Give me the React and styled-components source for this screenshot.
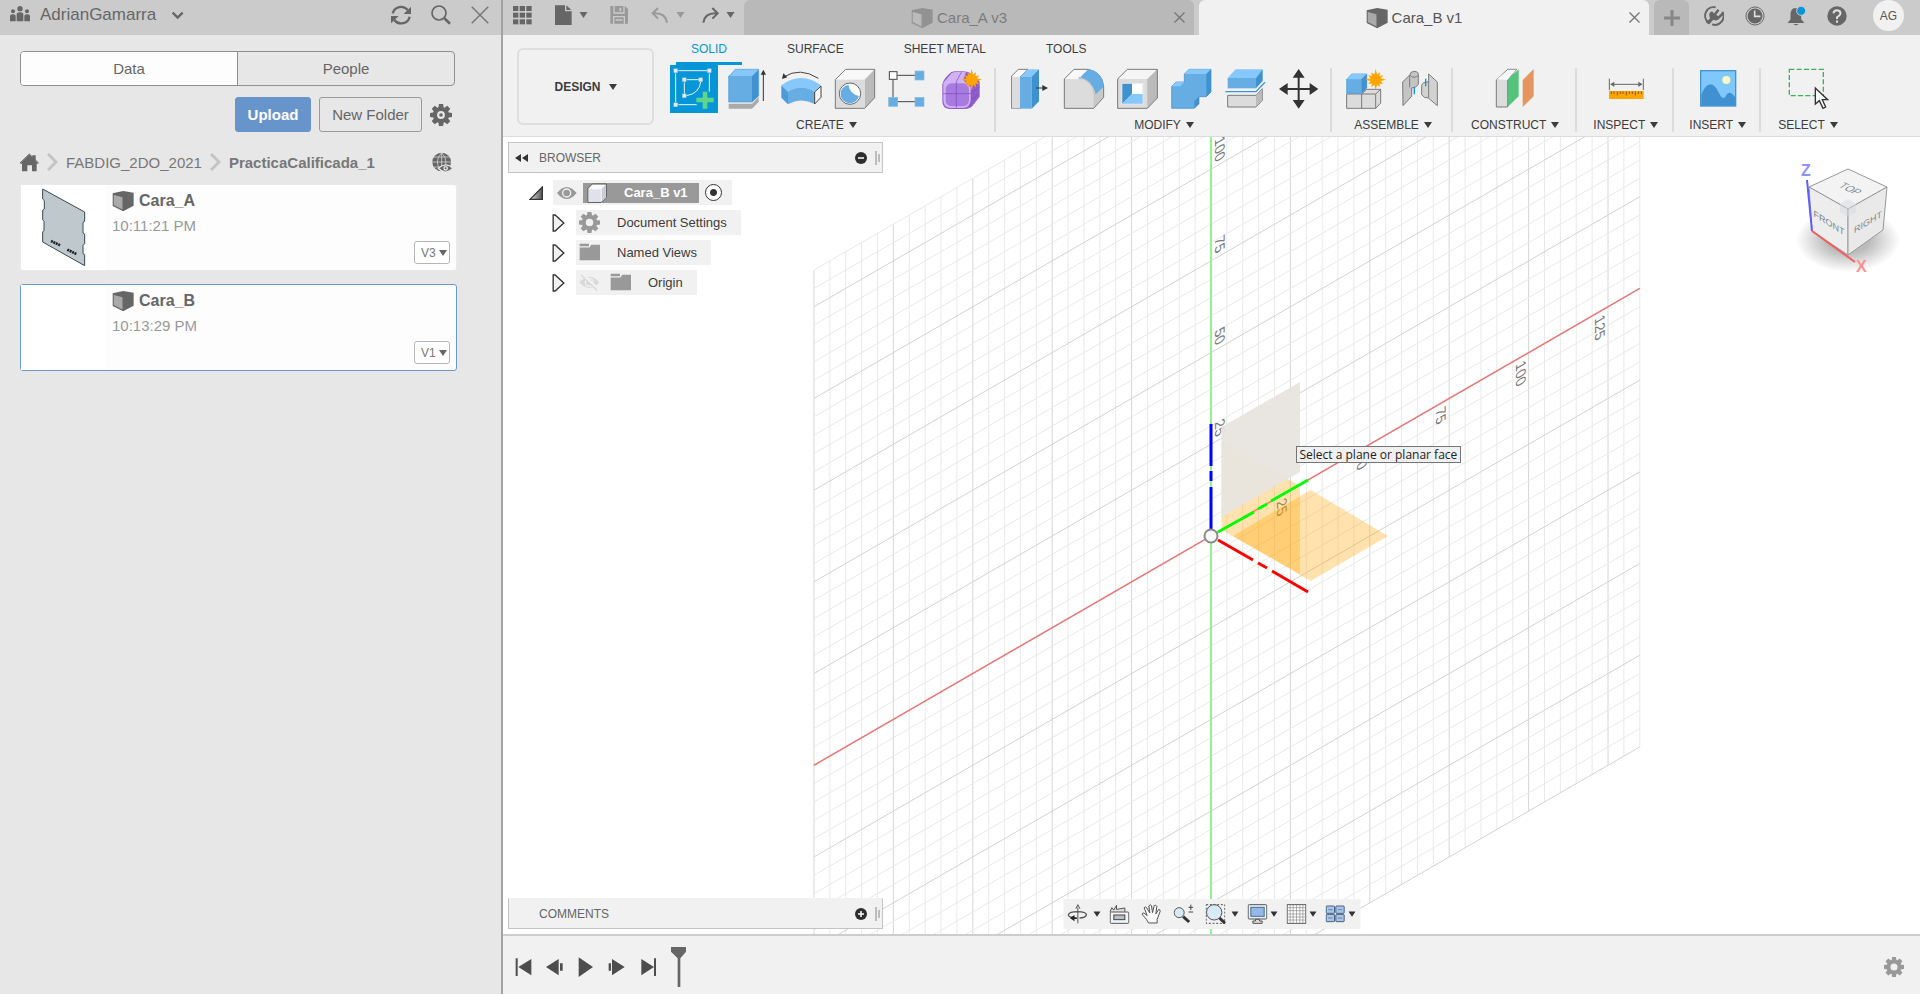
import React from 'react';
import styled, { createGlobalStyle, css } from 'styled-components';

const GlobalStyle = createGlobalStyle`
  *, *::before, *::after { box-sizing: border-box; }
  body { margin: 0; background: #fff; font-family: "Liberation Sans", Arial, sans-serif; }
  button, input, select { font: inherit; color: inherit; }
`;

/* ---------- shared parts ---------- */

const plainButton = css`
  display: flex;
  align-items: center;
  justify-content: center;
  padding: 0;
  border: 0;
  background: none;
  color: inherit;
  cursor: pointer;
`;

const IconButton = styled.button`
  ${plainButton}
  flex: none;
`;

const Glyph = styled.svg`
  display: block;
  flex: none;
`;

function Icon({ box, size = 20, height, children }) {
  return (
    <Glyph width={size} height={height || size} viewBox={box} aria-hidden="true">
      {children}
    </Glyph>
  );
}

function Caret({ size = 8, color = 'currentColor' }) {
  return (
    <Icon box="0 0 8 6" size={size} height={6}>
      <path d="M0 0H8L4 6Z" fill={color} />
    </Icon>
  );
}

function Star({ x, y }) {
  const points = [];
  for (let i = 0; i < 24; i += 1) {
    const r = i % 2 ? 16 : i % 6 === 0 ? 32 : 26;
    const a = (i * Math.PI) / 12;
    points.push(`${x + r * Math.sin(a)},${y - r * Math.cos(a)}`);
  }
  return <polygon points={points.join(' ')} fill="#ffa500" />;
}

function Gear({ size = 20, color = '#666', hub }) {
  return (
    <Icon box="-12 -12 24 24" size={size}>
      <circle r="6.5" fill="none" stroke={color} strokeWidth="4.5" />
      {[0, 45, 90, 135, 180, 225, 270, 315].map((a) => (
        <path key={a} d="M-3 -7H3L2.3 -12H-2.3Z" fill={color} transform={`rotate(${a})`} />
      ))}
      {hub && <circle r="2" fill={color} />}
    </Icon>
  );
}

function PartIcon({ size = 22, tone = '#666', face = '#aaa' }) {
  return (
    <Icon box="336 571 63 63" size={size}>
      <path d="M338 580L368 574L398 579V616L368 632L338 617Z" fill={tone} />
      <path d="M341 585L366 592V627L341 614Z" fill={face} />
    </Icon>
  );
}

/* ---------- page ---------- */

const Page = styled.div`
  display: flex;
  min-height: 100vh;
  overflow: hidden;
`;

const DataPanel = styled.aside`
  flex: none;
  width: 503px;
  background: #e7e7e7;
  border-right: 2px solid #a3a3a3;
  color: #666;
`;

const PanelHeader = styled.header`
  display: flex;
  align-items: center;
  gap: 20px;
  height: 35px;
  padding: 0 12px 5px 10px;
  background: #cbcbcb;
`;

const TeamButton = styled.button`
  ${plainButton}
  gap: 10px;
  margin-right: auto;
  font-size: 17px;
  line-height: 20px;
`;

const TeamName = styled.span`
  padding-right: 4px;
`;

const PanelBody = styled.div`
  padding: 16px 44px 0 20px;
  font-size: 15px;
`;

const Segments = styled.div`
  display: flex;
  height: 35px;
  margin-right: 2px;
  border: 1px solid #8f8f8f;
  border-radius: 4px;
  overflow: hidden;
`;

const Segment = styled.button`
  ${plainButton}
  flex: 1;
  background: ${(p) => (p.$active ? '#fdfdfd' : 'transparent')};
  & + & { border-left: 1px solid #8f8f8f; }
`;

const Actions = styled.div`
  display: flex;
  align-items: center;
  justify-content: flex-end;
  gap: 8px;
  margin: 11px 5px 0 0;
`;

const ActionButton = styled.button`
  ${plainButton}
  width: ${(p) => (p.$primary ? 76 : 103)}px;
  height: 35px;
  border: 1px solid ${(p) => (p.$primary ? '#6794cb' : '#999')};
  border-radius: 3px;
  background: ${(p) => (p.$primary ? '#6794cb' : 'transparent')};
  color: ${(p) => (p.$primary ? '#fff' : '#666')};
  font-weight: ${(p) => (p.$primary ? 700 : 400)};
`;

const Crumbs = styled.nav`
  display: flex;
  align-items: center;
  gap: 8px;
  height: 42px;
  margin: 10px 4px 0 0;
  padding-bottom: 2px;
`;

const Crumb = styled.a`
  color: #777;
  font-weight: ${(p) => (p.$current ? 700 : 400)};
  text-decoration: none;
`;

const PushRight = styled(IconButton)`
  margin-left: auto;
`;

const Files = styled.ul`
  display: flex;
  flex-direction: column;
  gap: 13px;
  margin: 0;
  padding: 0;
  list-style: none;
`;

const FileCard = styled.li`
  display: flex;
  height: 87px;
  border: 1px solid ${(p) => (p.$selected ? '#6a97cc' : '#e9e9e9')};
  border-radius: 3px;
  background: #fdfdfd;
`;

const Thumb = styled.div`
  width: 85px;
  background: #fff;
`;

const FileInfo = styled.div`
  flex: 1;
  padding: 5px 0 0 6px;
`;

const FileName = styled.div`
  display: flex;
  align-items: center;
  gap: 5px;
  height: 22px;
  font-size: 16px;
  font-weight: 700;
`;

const FileTime = styled.div`
  margin-top: 5px;
  color: #999;
  line-height: 18px;
`;

const Version = styled.label`
  position: relative;
  align-self: flex-end;
  width: 36px;
  height: 23px;
  margin: 0 6px 6px 0;
  & svg { position: absolute; right: 3px; top: 9px; pointer-events: none; }
`;

const VersionSelect = styled.select`
  appearance: none;
  width: 100%;
  height: 100%;
  padding: 0 0 0 6px;
  border: 1px solid #b5b5b5;
  border-radius: 3px;
  background: #fff;
  color: #777;
  font-size: 12px;
`;

/* ---------- workspace chrome ---------- */

const Workspace = styled.main`
  display: flex;
  flex: 1;
  flex-direction: column;
  min-width: 0;
  color: #3c3c3c;
`;

const TitleBar = styled.header`
  display: flex;
  gap: 5px;
  height: 35px;
  background: #cbcbcb;
`;

const QuickBar = styled.div`
  display: flex;
  align-items: center;
  width: 236px;
  padding: 0 0 5px 10px;
  color: #666;
`;

const QuickButton = styled.button`
  ${plainButton}
  gap: 6px;
  margin-right: ${(p) => p.$after}px;
  color: ${(p) => (p.$off ? '#999' : '#666')};
`;

const DocTab = styled.div`
  display: flex;
  flex: 1;
  align-items: center;
  padding: 0 9px 0 0;
  border-radius: 6px 6px 0 0;
  background: ${(p) => (p.$active ? '#f1f1f1' : '#b9b9b9')};
  color: ${(p) => (p.$active ? '#555' : '#7c7c7c')};
`;

const DocName = styled.button`
  ${plainButton}
  flex: 1;
  gap: 4px;
  font-size: 15px;
`;

const NewTab = styled.button`
  ${plainButton}
  width: 35px;
  border-radius: 6px 6px 0 0;
  background: #b9b9b9;
`;

const Account = styled.div`
  display: flex;
  align-items: center;
  gap: 21px;
  padding: 0 16px 4px 10px;
`;

const Avatar = styled.button`
  ${plainButton}
  width: 31px;
  height: 31px;
  margin-left: 5px;
  border-radius: 50%;
  background: #f1f1f1;
  color: #555;
  font-size: 12px;
`;

const Ribbon = styled.section`
  display: flex;
  gap: 13px;
  height: 102px;
  padding-left: 14px;
  border-bottom: 1px solid #dcdcdc;
  background: #f1f1f1;
  font-size: 12px;
`;

const DesignButton = styled.button`
  ${plainButton}
  flex: none;
  gap: 8px;
  width: 137px;
  height: 77px;
  margin-top: 13px;
  border: 2px solid #dedede;
  border-radius: 6px;
  font-weight: 700;
`;

const RibbonMain = styled.div`
  flex: 1;
  min-width: 0;
`;

const RibbonTabs = styled.nav`
  display: flex;
  gap: 30px;
  height: 30px;
  padding-left: 9px;
`;

const RibbonTab = styled.button`
  ${plainButton}
  padding: 0 15px;
  border-bottom: 3px solid ${(p) => (p.$active ? '#0696d7' : 'transparent')};
  color: ${(p) => (p.$active ? '#0696d7' : '#3c3c3c')};
`;

const Groups = styled.div`
  display: flex;
  padding-left: 3px;
`;

const Group = styled.div`
  position: relative;
  display: flex;
  flex: none;
  flex-direction: column;
  align-items: center;
  padding: ${(p) => p.$pad};
  &:not(:last-child)::after {
    content: '';
    position: absolute;
    top: 3px;
    right: 0;
    width: 2px;
    height: 64px;
    background: #dcdcdc;
  }
`;

const Tools = styled.div`
  display: flex;
  gap: ${(p) => p.$gap || 6}px;
`;

const Tool = styled.button`
  ${plainButton}
  width: 48px;
  height: 48px;
  background: ${(p) => (p.$active ? '#0696d7' : 'transparent')};
`;

const GroupLabel = styled.button`
  ${plainButton}
  gap: 5px;
  height: 24px;
`;

/* ---------- viewport ---------- */

const Viewport = styled.section`
  position: relative;
  display: flex;
  flex: 1;
  flex-direction: column;
  justify-content: space-between;
  padding: 5px;
  background: #fff;
  overflow: hidden;
`;

const Scene = styled.svg`
  position: absolute;
  inset: 0;
  width: 100%;
  height: 100%;
`;

const Dock = styled.div`
  position: relative;
  display: flex;
  align-items: center;
  width: 375px;
  height: 31px;
  padding: 0 1px 0 6px;
  border: 1px solid #c4c4c4;
  border-top-color: ${(p) => (p.$open ? '#c4c4c4' : '#f1f1f1')};
  background: #f1f1f1;
  color: #666;
  font-size: 12px;
`;

const DockTitle = styled.h2`
  flex: 1;
  margin: 0;
  padding-left: ${(p) => (p.$indent ? 24 : 11)}px;
  font-size: 12px;
  font-weight: 400;
`;

const Tree = styled.ul`
  display: flex;
  flex-direction: column;
  gap: 5px;
  margin: 7px 0 0;
  padding: 0;
  list-style: none;
  font-size: 13px;
`;

const TreeRow = styled.li`
  display: flex;
  align-items: center;
  gap: ${(p) => (p.$root ? 10 : 11)}px;
  height: 25px;
  padding-left: ${(p) => (p.$root ? 21 : 44)}px;
`;

const TreeItem = styled.div`
  display: flex;
  align-items: center;
  gap: 10px;
  height: 25px;
  padding: 0 14px 0 3px;
  background: #f1f1f1;
`;

const TreeText = styled.span`
  padding-left: 7px;
`;

const RootItem = styled(TreeItem)`
  gap: 6px;
  padding: 0 10px 0 4px;
`;

const RootName = styled.span`
  display: flex;
  align-items: center;
  gap: 17px;
  height: 20px;
  padding: 0 11px 0 4px;
  background: #999;
  color: #fff;
  font-weight: 700;
`;

const ActiveRadio = styled.input`
  appearance: none;
  width: 17px;
  height: 17px;
  margin: 0;
  border: 1px solid #333;
  border-radius: 50%;
  background: radial-gradient(circle, #333 3px, #fff 4px);
`;

const Hint = styled.div`
  position: absolute;
  left: calc(50% + 84px);
  top: calc(50% - 90px);
  height: 17px;
  padding: 0 3px;
  border: 1px solid #767676;
  background: #f0f0f0;
  color: #222;
  font-family: "Open Sans", "Noto Sans", sans-serif;
  font-size: 12px;
  line-height: 15px;
  white-space: nowrap;
`;

const CubeView = styled.svg`
  position: absolute;
  top: 23px;
  right: 10px;
`;

const NavBar = styled.div`
  position: absolute;
  bottom: 5px;
  left: 50%;
  display: flex;
  align-items: center;
  height: 30px;
  padding: 0 5px 0 4px;
  background: #f1f1f1;
  transform: translateX(-50%);
`;

const NavButton = styled.button`
  ${plainButton}
  gap: ${(p) => (p.$wide ? 6 : 3)}px;
  &:not(:last-child) { margin-right: ${(p) => (p.$menu ? 9 : 12)}px; }
`;

const Timeline = styled.footer`
  display: flex;
  align-items: center;
  height: 60px;
  padding: 4px 16px 0 12px;
  border-top: 2px solid #cdcdcd;
  background: #f1f1f1;
`;

const Playback = styled.div`
  display: flex;
  flex: 1;
  align-items: center;
  gap: 11px;
`;

/* ---------- ribbon icons ---------- */

const T = ({ x, children }) => <Icon box={`${x} 195 144 144`} size={48}>{children}</Icon>;
const edge = { stroke: '#7a7a7a', strokeWidth: 3, strokeLinejoin: 'round' };

const SketchIcon = () => (
  <T x={510}>
    <g fill="none" stroke="#e8f4fb" strokeWidth="3">
      <path d="M535 212H621M527 220V306M628 220V275M535 314H590M561 239H596M553 247V280M602 246Q598 280 560 287" />
    </g>
    {[[527, 212], [628, 212], [527, 314], [553, 239], [602, 239], [553, 287]].map(([x, y]) => (
      <rect key={`${x}-${y}`} x={x - 6} y={y - 6} width="12" height="12" fill="#e8e8e8" />
    ))}
    <path d="M608 275H622V293H641V307H622V326H608V307H589V293H608Z" fill="#5cd68a" />
  </T>
);

const createIcons = [
  ['Create Sketch', <SketchIcon />],
  ['Extrude', <T x={669}>
    <path d="M686 311H756L776 291V306L756 326H686Z" fill="#aaa" />
    <path d="M686 228L706 208H776L756 228Z" fill="#86c8fb" />
    <path d="M686 228H756V306H686Z" fill="#66ade4" />
    <path d="M756 228L776 208V288L756 306Z" fill="#3f92cf" />
    <path d="M690 227L706 208H776V288L756 306H686V228Z" fill="none" stroke="#4c9bd6" strokeWidth="2" />
    <path d="M790 303V218" stroke="#333" strokeWidth="3" />
    <path d="M782 224L790 209L798 224Z" fill="#333" />
  </T>],
  ['Revolve', <T x={828}>
    <path d="M851 231Q900 200 955 235" fill="none" stroke="#444" strokeWidth="3" />
    <path d="M846 237L850 220L862 232Z" fill="#333" />
    <path d="M844 256Q903 212 963 256L944 275Q903 250 864 275Z" fill="#86c8fb" />
    <path d="M864 275Q903 250 944 275V312Q903 290 864 313Z" fill="#66ade4" />
    <path d="M844 256L864 275V313L844 293Z" fill="#4c9bd6" />
    <path d="M944 276L963 258V292L944 312Z" fill="#f5f5f5" stroke="#444" strokeWidth="3" />
  </T>],
  ['Hole', <T x={987}>
    <path d="M1006 239L1037 208H1124L1094 239Z" fill="#f8f8f8" />
    <path d="M1094 239L1124 208V293L1094 325Z" fill="#bbb" />
    <path d="M1006 239H1094V325H1006Z" fill="#dcdcdc" />
    <path d="M1006 239L1037 208H1124V293L1094 325H1006Z" fill="none" {...edge} />
    <circle cx="1050" cy="281" r="32" fill="#fff" stroke="#666" strokeWidth="3" />
    <path d="M1045 254A28 28 0 1 0 1077 288Q1050 282 1045 254Z" fill="#66ade4" />
  </T>],
  ['Rectangular Pattern', <T x={1146}>
    <path d="M1192 226H1245M1179 239V293M1192 305H1245" stroke="#444" strokeWidth="3" />
    <rect x="1168" y="215" width="23" height="23" fill="#fff" stroke="#444" strokeWidth="3" />
    {[[1245, 213], [1166, 292], [1245, 292]].map(([x, y]) => (
      <rect key={x + y} x={x} y={y} width="27" height="27" fill="#66ade4" stroke="#8bb9d8" strokeWidth="2" />
    ))}
  </T>],
  ['Create Form', <T x={1305}>
    <path d="M1327 252Q1330 236 1354 216Q1372 210 1405 216L1439 245V290L1420 314Q1412 327 1392 327H1348Q1327 325 1327 303Z" fill="#8f5cc9" />
    <path d="M1330 248L1355 219Q1372 212 1398 216L1390 240L1412 262V300Q1410 323 1390 324H1350Q1330 322 1330 300Z" fill="#d0b2f5" />
    <rect x="1337" y="250" width="70" height="69" rx="18" fill="#a87be0" />
    <path d="M1369 245V325M1329 281H1411L1440 260M1369 245L1385 215M1414 257L1437 240M1414 300L1437 282" fill="none" stroke="#7b4ab8" strokeWidth="2" />
    <Star x={1415} y={239} />
  </T>],
];

const modifyIcons = [
  ['Press Pull', <T x={15}>
    <path d="M35 228L55 208H84L61 230V325H35Z" fill="#f8f8f8" {...edge} />
    <path d="M36 231H60V325H36Z" fill="#dcdcdc" />
    <path d="M60 230L84 208H117L95 230Z" fill="#86c8fb" />
    <path d="M60 230H95V326H60Z" fill="#66ade4" />
    <path d="M95 230L117 208V304L95 326Z" fill="#3f92cf" />
    <path d="M108 264H132" stroke="#333" strokeWidth="3" />
    <path d="M127 255L144 264L127 273Z" fill="#333" />
  </T>],
  ['Fillet', <T x={177}>
    <path d="M193 237L222 208H265Q308 218 311 260V292L281 325H193Z" fill="#c8c8c8" />
    <path d="M193 237L222 208H265L236 237Z" fill="#f8f8f8" />
    <path d="M193 237H236Q278 240 281 290V325H193Z" fill="#dcdcdc" />
    <path d="M193 237L222 208H265Q308 218 311 260V292L281 325H193Z" fill="none" {...edge} />
    <path d="M236 237L265 208Q308 216 311 260L287 283Q278 240 236 231Z" fill="#66ade4" />
  </T>],
  ['Shell', <T x={339}>
    <path d="M353 237L382 208H472V294L442 325H353Z" fill="#bbb" />
    <path d="M353 237L382 208H472L442 237Z" fill="#f5f5f5" />
    <path d="M353 237H442V325H353Z" fill="#dcdcdc" />
    <path d="M353 237L382 208H472V294L442 325H353Z" fill="none" {...edge} />
    <path d="M367 251H428V311H367Z" fill="#fff" stroke="#eee" strokeWidth="4" />
    <path d="M367 251H396V282L367 311Z" fill="#3f92cf" />
    <path d="M367 311L396 282H428V311Z" fill="#86c8fb" />
  </T>],
  ['Combine', <T x={501}>
    <path d="M515 259L528 246H553V222L567 208H633V276L619 290H597V311L583 325H515Z" fill="#66ade4" stroke="#3f86bf" strokeWidth="2" />
    <path d="M553 222L567 208H633L619 222ZM515 259L528 246H553L541 259Z" fill="#86c8fb" />
    <path d="M619 222L633 208V276L619 290ZM583 302L597 290V311L583 325Z" fill="#3f92cf" />
  </T>],
  ['Split Body', <T x={663}>
    <path d="M683 234L707 208H788L768 234Z" fill="#86c8fb" />
    <path d="M683 234H768V265H683Z" fill="#66ade4" />
    <path d="M768 234L788 208V243L768 265Z" fill="#3f92cf" />
    <path d="M676 275H768L795 247" fill="none" stroke="#3f92dd" strokeWidth="4" />
    <path d="M683 286H768L787 266V302L768 321H683Z" fill="#dcdcdc" {...edge} />
    <path d="M768 286L787 267V302L768 320Z" fill="#bbb" />
  </T>],
  ['Move', <T x={825}>
    <path d="M896 225V310M855 267H938" stroke="#333" strokeWidth="6" />
    <path d="M896 207L914 233H878ZM896 326L914 300H878ZM837 267L863 249V285ZM955 267L929 249V285Z" fill="#333" />
  </T>],
];

const assembleIcons = [
  ['New Component', <T x={1026}>
    <path d="M1040 282H1085L1100 268H1142V309L1127 325H1040Z" fill="#dcdcdc" {...edge} />
    <path d="M1085 282V325M1085 282H1127L1142 268M1127 282V325" fill="none" {...edge} />
    <path d="M1040 238L1055 222H1100V264L1085 280H1040Z" fill="#66ade4" stroke="#3f92cf" strokeWidth="2" />
    <path d="M1040 238L1055 222H1100L1085 238Z" fill="#86c8fb" />
    <path d="M1085 238L1100 222V264L1085 280Z" fill="#3f92cf" />
    <Star x={1127} y={239} />
  </T>],
  ['Joint', <T x={1188}>
    <path d="M1208 246L1229 225Q1231 214 1243 214Q1256 215 1255 224V253Q1250 263 1235 264V289L1209 317Z" fill="#c4c4c4" {...edge} />
    <path d="M1229 227V262M1231 226Q1242 238 1255 226" fill="none" {...edge} />
    <path d="M1312 317V246L1286 222V246Q1268 244 1265 257V284Q1272 295 1285 294Z" fill="#d2d2d2" {...edge} />
    <path d="M1286 245V293" {...edge} />
    <path d="M1243 262V283M1277 236V259" stroke="#1393e0" strokeWidth="4" />
  </T>],
];

const constructIcon = (
  <T x={153}>
    <path d="M169 240L203 208H230L203 240V321H169Z" fill="#dcdcdc" {...edge} />
    <path d="M171 238L204 209H228L202 240Z" fill="#f8f8f8" />
    <path d="M203 239L236 208V289L203 321Z" fill="#55c37b" />
    <path d="M248 240L281 207V289L248 321Z" fill="#e5965f" />
  </T>
);

const inspectIcon = (
  <T x={486}>
    <path d="M508 236V270M610 236V270M512 253H606" stroke="#666" strokeWidth="3" />
    <path d="M511 253L523 245V261ZM607 253L595 245V261Z" fill="#666" />
    <rect x="507" y="273" width="104" height="24" fill="#ffa500" />
    <path d="M514 274V282M522 274V282M532 274V286M541 274V282M549 274V282M559 274V286M568 274V282M577 274V282M586 274V286M595 274V282M604 274V282" stroke="#8a5a00" strokeWidth="3" />
  </T>
);

const insertIcon = (
  <T x={762}>
    <rect x="782" y="212" width="105" height="106" fill="#80c8fc" stroke="#4594cf" strokeWidth="4" />
    <path d="M784 284C800 244 820 244 835 275Q847 302 856 290Q868 266 885 292V317H784Z" fill="#3f92cf" />
    <circle cx="859" cy="240" r="12" fill="#fdf7c3" />
  </T>
);

const selectIcon = (
  <T x={1032}>
    <rect x="1048" y="208" width="102" height="79" fill="none" stroke="#3dae5d" strokeWidth="4" strokeDasharray="15 7" />
    <path d="M1126 264V312L1138 302L1149 325L1157 321L1147 299H1163Z" fill="#f8f8f8" stroke="#333" strokeWidth="4" />
  </T>
);

const groups = [
  { label: 'CREATE', pad: '0 13px 0 0', gap: 5, tools: createIcons },
  { label: 'MODIFY', pad: '0 9px', tools: modifyIcons },
  { label: 'ASSEMBLE', pad: '0 9px 0 10px', tools: assembleIcons },
  { label: 'CONSTRUCT', pad: '0 18px', tools: [['Offset Plane', constructIcon]] },
  { label: 'INSPECT', pad: '0 16px', tools: [['Measure', inspectIcon]] },
  { label: 'INSERT', pad: '0 15px', tools: [['Insert Image', insertIcon]] },
  { label: 'SELECT', pad: '0 17px', tools: [['Window Select', selectIcon]] },
];

/* ---------- 3D scene ---------- */

const STEP_X = 15.88;
const SLOPE = 0.5774;
const STEP_Y = 18.34;

function Grid() {
  const lines = [];
  const left = -25 * STEP_X;
  const right = 27 * STEP_X;
  for (let i = -25; i <= 27; i += 1) {
    const x = i * STEP_X;
    lines.push(
      <line key={`v${i}`} x1={x} x2={x} y1={-x * SLOPE - 27 * STEP_Y} y2={-x * SLOPE + 25 * STEP_Y}
        stroke={i % 5 ? '#e9e9e9' : '#d6d6d6'} />
    );
  }
  for (let j = -27; j <= 25; j += 1) {
    const y = j * STEP_Y;
    lines.push(
      <line key={`h${j}`} x1={left} x2={right} y1={y - left * SLOPE} y2={y - right * SLOPE}
        stroke={j % 5 ? '#e9e9e9' : '#d2d2d2'} />
    );
  }
  return <g>{lines}</g>;
}

function ScaleLabels() {
  const unit = STEP_X / 5;
  return (
    <g fontSize="14" fill="#777">
      {[25, 50, 75, 100].map((v) => (
        <text key={`z${v}`} textAnchor="end" transform={`translate(4 ${(-v * STEP_Y) / 5 - 6}) rotate(90) skewX(30)`}>{v}</text>
      ))}
      {[25, 50, 75, 100, 125].map((v) => (
        <text key={`x${v}`} transform={`translate(${v * unit - 13} ${-v * unit * SLOPE + 12}) rotate(90) skewX(30)`}>{v}</text>
      ))}
    </g>
  );
}

function ModelScene() {
  return (
    <Scene viewBox="-708 -399 1417 797" preserveAspectRatio="xMidYMid slice" role="img" aria-label="Origin planes and sketch grid">
      <Grid />
      <line x1={-25 * STEP_X} y1={25 * STEP_X * SLOPE} x2={27 * STEP_X} y2={-27 * STEP_X * SLOPE} stroke="#e67878" strokeWidth="1.5" />
      <line x1="0" x2="0" y1="-495" y2="458" stroke="#8ff58f" strokeWidth="2" />
      <ScaleLabels />
      <path d="M10.5 -95L89 -50V38L10.5 -6Z" fill="#ffa500" fillOpacity="0.32" />
      <path d="M22 0L99.5 -46L177 0L99.5 45Z" fill="#ffa500" fillOpacity="0.32" />
      <path d="M10.5 -109L89 -154V-64L10.5 -19Z" fill="#e8e4df" fillOpacity="0.94" />
      <path d="M0 -112V-70M0 -65V-55M0 -49V-7" stroke="#00f" strokeWidth="3" />
      <path d="M7 -4L43 -24M47 -27L56 -32M60 -35L97 -56" stroke="#0f0" strokeWidth="3" />
      <path d="M7 4L42 24M47 27L56 32M61 35L97 56" stroke="#f00" strokeWidth="3" />
      <circle r="6.5" fill="#f8f8f8" stroke="#8a8a8a" strokeWidth="2" />
    </Scene>
  );
}

function ViewCube() {
  return (
    <CubeView width="120" height="120" viewBox="0 0 120 120" role="img" aria-label="View cube">
      <defs>
        <radialGradient id="shade">
          <stop offset="0.4" stopColor="#777" stopOpacity="0.5" />
          <stop offset="0.75" stopColor="#777" stopOpacity="0.2" />
          <stop offset="1" stopColor="#777" stopOpacity="0" />
        </radialGradient>
      </defs>
      <ellipse cx="58" cy="80" rx="52" ry="32" fill="url(#shade)" />
      <g stroke="#999" strokeLinejoin="round">
        <path d="M58 9L97 27L58 49L19 27Z" fill="#f3f3f3" />
        <path d="M19 27L58 49V95L22 71Z" fill="#ededed" />
        <path d="M97 27L58 49V95L93 70Z" fill="#e9e9e9" />
      </g>
      <path d="M50 44L58 39L66 44V52L58 57L50 52Z" fill="#d5d9e0" fillOpacity="0.5" />
      <path d="M17 20L22 71" stroke="#5c5cff" strokeWidth="2" />
      <path d="M22 71L65 102" stroke="#f06060" strokeWidth="2" />
      <g fill="#80868c" textAnchor="middle">
        <text transform="translate(57 31) rotate(26) skewX(-30)" fontSize="10">TOP</text>
        <text transform="translate(39 66) skewY(32)" fontSize="9">FRONT</text>
        <text transform="translate(78 65) skewY(-31)" fontSize="9">RIGHT</text>
      </g>
      <g fontSize="16" fontWeight="700">
        <text x="11" y="16" fill="#9090ff">Z</text>
        <text x="66" y="112" fill="#ff9090">X</text>
      </g>
    </CubeView>
  );
}

/* ---------- small icons ---------- */

const CloseIcon = ({ size = 18, width = 4 }) => (
  <Icon box="0 0 48 48" size={size}>
    <path d="M2 2L46 46M46 2L2 46" stroke="#777" strokeWidth={width} />
  </Icon>
);

const Chevron = () => (
  <Icon box="0 0 11 18" size={11} height={18}>
    <path d="M1 1L9 9L1 17" fill="none" stroke="#c4c4c4" strokeWidth="3" />
  </Icon>
);

const FolderIcon = () => (
  <Icon box="235 322 63 60" size={21}>
    <path d="M237 326H265V333H237ZM237 337H266L272 329H298V375H237Z" fill="#999" />
  </Icon>
);

const Expander = () => (
  <Icon box="158 235 38 54" size={13} height={18}>
    <path d="M161 238L167 238L193 262L167 286H161Z" fill="#f1f1f1" stroke="#333" strokeWidth="4" />
  </Icon>
);

const Grip = () => (
  <Icon box="0 0 14 16" size={14} height={16}>
    <path d="M9 1V15M12 4V12" stroke="#888" />
  </Icon>
);

const RoundSign = ({ plus }) => (
  <Icon box="0 0 12 12" size={12}>
    <circle cx="6" cy="6" r="6" fill="#2e2e2e" />
    <path d={plus ? 'M3 6H9M6 3V9' : 'M3 6H9'} stroke="#fff" strokeWidth="1.5" />
  </Icon>
);

const PlateThumb = () => (
  <Icon box="63 556 255 255" size={85}>
    <path d="M128 568L254 637V665L249 668V700L254 703V732L249 737V762L254 765V798L128 727V697L132 692V665L128 660V632L133 628V603L128 598Z" fill="#bfc9cd" stroke="#39484c" strokeWidth="3" />
    <path d="M153 724L181 737M202 750L229 763" stroke="#222" strokeWidth="8" strokeDasharray="6 2" />
  </Icon>
);

const navItems = [
  { name: 'Orbit', menu: true, wide: true, box: '80 42 60 60', art: (
    <>
      <path d="M111 100V52M105 56L111 44L117 56" fill="none" stroke="#555" strokeWidth="3" />
      <path d="M100 84Q82 80 82 74Q86 65 110 65Q136 66 137 74Q134 83 116 84" fill="none" stroke="#555" strokeWidth="4" />
      <path d="M87 84L101 75V94ZM100 82H108V87H100Z" fill="#222" />
    </>) },
  { name: 'Look At', box: '204 42 60 60', art: (
    <>
      <path d="M205 66L211 53L217 60L225 46V58L250 54V65" fill="#ddd" stroke="#555" strokeWidth="3" />
      <rect x="206" y="66" width="56" height="34" rx="3" fill="#f5f5f5" stroke="#555" strokeWidth="3" />
      <rect x="217" y="75" width="33" height="14" fill="#b5bfc7" stroke="#444" strokeWidth="3" />
    </>) },
  { name: 'Pan', box: '303 42 60 60', art: (
    <path d="M318 88L304 72Q307 66 313 71L320 77L311 53Q316 48 319 54L328 69L325 48Q329 41 333 47L336 68L341 47Q346 43 349 49L346 72L354 59Q360 58 359 64L350 88V99H324Z" fill="#fafafa" stroke="#555" strokeWidth="3" strokeLinejoin="round" />) },
  { name: 'Zoom', box: '398 42 60 60', art: (
    <>
      <circle cx="415" cy="68" r="15" fill="#d6ebf5" stroke="#555" strokeWidth="3" />
      <path d="M427 80L445 96" stroke="#333" strokeWidth="9" />
      <path d="M443 52H457M450 44V60M443 66H457" stroke="#444" strokeWidth="3" />
    </>) },
  { name: 'Zoom Window', menu: true, wide: true, box: '495 42 60 60', art: (
    <>
      <path d="M497 44H553V100H497Z" fill="none" stroke="#555" strokeWidth="3" strokeDasharray="6 5" />
      <circle cx="521" cy="67" r="23" fill="#d6ebf5" stroke="#555" strokeWidth="3" />
      <path d="M537 84L554 100" stroke="#333" strokeWidth="9" />
    </>) },
  { name: 'Display Settings', menu: true, box: '620 42 60 60', art: (
    <>
      <rect x="622" y="44" width="56" height="43" rx="3" fill="#eee" stroke="#555" strokeWidth="3" />
      <rect x="630" y="52" width="40" height="27" fill="#93b9e4" stroke="#4a6ea0" strokeWidth="3" />
      <path d="M644 88H656V93H664V100H636V93H644Z" fill="#ddd" stroke="#555" strokeWidth="3" />
    </>) },
  { name: 'Grid and Snaps', menu: true, box: '736 42 60 60', art: (
    <>
      <rect x="738" y="44" width="56" height="56" fill="#fff" stroke="#555" strokeWidth="3" />
      <path d="M747 44V100M756 44V100M766 44V100M776 44V100M785 44V100M738 53H794M738 62H794M738 72H794M738 81H794M738 90H794" stroke="#888" strokeWidth="2" />
    </>) },
  { name: 'Viewports', menu: true, box: '851 40 60 60', art: (
    <g fill="#a9c6e8" stroke="#4a5f82" strokeWidth="3">
      <rect x="853" y="46" width="25" height="22" rx="2" /><rect x="882" y="46" width="25" height="22" rx="2" />
      <rect x="853" y="71" width="25" height="22" rx="2" /><rect x="882" y="71" width="25" height="22" rx="2" />
      <path d="M859 57H872M888 57H901M859 82H872M888 82H901" strokeWidth="2" />
    </g>) },
];

const playItems = [
  ['Go to start', 'M48 234H54V287H48ZM56 260L95 236V285Z', 46],
  ['Step back', 'M138 260L176 236V285ZM180 249H188V271H180Z', 138],
  ['Play', 'M237 231L280 260L237 290Z', 232],
  ['Step forward', 'M327 249H334V271H327ZM337 236L375 260L337 285Z', 325],
  ['Go to end', 'M424 236L462 260L424 285ZM462 234H468V287H462Z', 417],
];

/* ---------- composition ---------- */

function FileItem({ name, time, version, selected, children }) {
  return (
    <FileCard $selected={selected}>
      <Thumb>{children}</Thumb>
      <FileInfo>
        <FileName><PartIcon />{name}</FileName>
        <FileTime>{time}</FileTime>
      </FileInfo>
      <Version>
        <VersionSelect aria-label={`${name} version`} defaultValue={version}>
          <option>{version}</option>
        </VersionSelect>
        <Caret size={8} color="#666" />
      </Version>
    </FileCard>
  );
}

function DataSide() {
  return (
    <DataPanel>
      <PanelHeader>
        <TeamButton>
          <Icon box="30 15 60 60">
            <g fill="#666">
              <circle cx="60" cy="26" r="8" /><circle cx="39" cy="34" r="6" /><circle cx="81" cy="34" r="6" />
              <path d="M50 64V44Q50 37 60 37Q70 37 70 44V64ZM30 64V50Q30 43 39 43Q47 43 47 50V64ZM73 64V50Q73 43 81 43Q90 43 90 50V64Z" />
            </g>
          </Icon>
          <TeamName>AdrianGamarra</TeamName>
          <Icon box="514 30 46 30" size={16} height={10}>
            <path d="M521 38L536 53L551 38" fill="none" stroke="#666" strokeWidth="7" />
          </Icon>
        </TeamButton>
        <IconButton aria-label="Refresh">
          <Icon box="1173 15 60 60">
            <path d="M1178 40A26 26 0 0 1 1223 30M1229 50A26 26 0 0 1 1183 60" fill="none" stroke="#666" strokeWidth="7" />
            <path d="M1233 20V42H1211ZM1173 70V48H1196Z" fill="#666" />
          </Icon>
        </IconButton>
        <IconButton aria-label="Search">
          <Icon box="1293 15 60 60">
            <circle cx="1317" cy="39" r="21" fill="none" stroke="#666" strokeWidth="5" />
            <path d="M1333 55L1350 71" stroke="#666" strokeWidth="8" />
          </Icon>
        </IconButton>
        <IconButton aria-label="Close panel"><CloseIcon /></IconButton>
      </PanelHeader>
      <PanelBody>
        <Segments>
          <Segment $active>Data</Segment>
          <Segment>People</Segment>
        </Segments>
        <Actions>
          <ActionButton $primary>Upload</ActionButton>
          <ActionButton>New Folder</ActionButton>
          <IconButton aria-label="Settings"><Gear size={22} hub /></IconButton>
        </Actions>
        <Crumbs aria-label="Folder path">
          <Crumb href="#home" aria-label="Home">
            <Icon box="62 461 57 57" size={19}>
              <path d="M62 493L90 465L99 474V468H109V484L118 493H112V516H98V498H84V516H68V493Z" fill="#666" />
              <path d="M62 491L90 464L118 491" fill="none" stroke="#666" strokeWidth="3" />
            </Icon>
          </Crumb>
          <Chevron />
          <Crumb href="#project">FABDIG_2DO_2021</Crumb>
          <Chevron />
          <Crumb href="#folder" $current>PracticaCalificada_1</Crumb>
          <PushRight aria-label="Open on the web">
            <Icon box="1297 456 63 63" size={21}>
              <circle cx="1326" cy="486" r="28" fill="#666" />
              <path d="M1326 458V514M1298 486H1354M1303 471H1349M1303 501H1349M1326 458Q1300 486 1326 514Q1352 486 1326 458" fill="none" stroke="#e7e7e7" strokeWidth="2" />
              <path d="M1316 505Q1338 484 1360 505Q1338 528 1316 505Z" fill="#666" stroke="#e7e7e7" strokeWidth="4" />
              <circle cx="1338" cy="505" r="5" fill="#666" stroke="#e7e7e7" strokeWidth="4" />
            </Icon>
          </PushRight>
        </Crumbs>
        <Files>
          <FileItem name="Cara_A" time="10:11:21 PM" version="V3"><PlateThumb /></FileItem>
          <FileItem name="Cara_B" time="10:13:29 PM" version="V1" selected />
        </Files>
      </PanelBody>
    </DataPanel>
  );
}

function AppTitleBar() {
  return (
    <TitleBar>
      <QuickBar>
        <QuickButton $after={22} aria-label="Show data panel">
          <Icon box="40 18 57 57" size={19}>
            {[40, 60, 80].map((x) => [18, 38, 58].map((y) => (
              <rect key={`${x}-${y}`} x={x} y={y} width="16" height="15" fill="#666" />
            )))}
          </Icon>
        </QuickButton>
        <QuickButton $after={22} aria-label="File">
          <Icon box="162 15 57 60" size={19} height={20}>
            <path d="M165 16H195V34H215V75H165ZM199 16L214 30H199Z" fill="#666" />
          </Icon>
          <Caret size={9} />
        </QuickButton>
        <QuickButton $after={23} $off aria-label="Save">
          <Icon box="333 18 54 54" size={18}>
            <path d="M334 18H378L387 27V71H334Z" fill="#999" />
            <path d="M345 18V39H375V18M344 71V50H376V71" fill="none" stroke="#cbcbcb" strokeWidth="4" />
            <path d="M364 23V34M350 60H370" stroke="#cbcbcb" strokeWidth="5" />
          </Icon>
        </QuickButton>
        <QuickButton $after={16} $off aria-label="Undo">
          <Icon box="456 18 57 57" size={19}>
            <path d="M464 40Q500 38 504 68" fill="none" stroke="#999" strokeWidth="6" />
            <path d="M477 24L461 40L477 56" fill="none" stroke="#999" strokeWidth="6" />
          </Icon>
          <Caret size={9} />
        </QuickButton>
        <QuickButton $after={0} aria-label="Redo">
          <Icon box="603 18 57 57" size={19}>
            <path d="M650 40Q614 38 610 68" fill="none" stroke="#666" strokeWidth="6" />
            <path d="M637 24L653 40L637 56" fill="none" stroke="#666" strokeWidth="6" />
          </Icon>
          <Caret size={9} />
        </QuickButton>
      </QuickBar>
      <DocTab>
        <DocName><PartIcon tone="#929292" face="#bbb" />Cara_A v3</DocName>
        <IconButton aria-label="Close Cara_A"><CloseIcon size={11} width={6} /></IconButton>
      </DocTab>
      <DocTab $active>
        <DocName><PartIcon />Cara_B v1</DocName>
        <IconButton aria-label="Close Cara_B"><CloseIcon size={11} width={6} /></IconButton>
      </DocTab>
      <NewTab aria-label="New design">
        <Icon box="0 0 16 16" size={16}><path d="M8 0V16M0 8H16" stroke="#888" strokeWidth="3" /></Icon>
      </NewTab>
      <Account>
        <IconButton aria-label="Extensions">
          <Icon box="790 15 62 62" size={20}>
            <path d="M803 66A27 27 0 0 1 826 19M847 33A27 27 0 0 1 815 72" fill="none" stroke="#666" strokeWidth="6" />
            <path d="M796 66L809 53Q801 36 815 31L821 38L832 24L838 29L828 42L834 47L846 35L851 41L838 54Q830 64 819 58L806 72Z" fill="#666" />
          </Icon>
        </IconButton>
        <IconButton aria-label="Job status">
          <Icon box="914 15 62 62" size={20}>
            <circle cx="945" cy="46" r="28" fill="none" stroke="#666" strokeWidth="3" />
            <circle cx="945" cy="46" r="23" fill="#666" />
            <path d="M944 29V47H962" fill="none" stroke="#e2e2e2" strokeWidth="5" />
          </Icon>
        </IconButton>
        <IconButton aria-label="Notifications">
          <Icon box="1038 14 62 62" size={20}>
            <path d="M1043 67L1052 55V38Q1053 22 1066 20Q1084 22 1085 40V55L1095 67ZM1061 70H1077Q1069 78 1061 70Z" fill="#666" />
            <circle cx="1085" cy="29" r="14" fill="#0696d7" stroke="#cbcbcb" strokeWidth="3" />
          </Icon>
        </IconButton>
        <IconButton aria-label="Help">
          <Icon box="1162 15 62 62" size={20}>
            <circle cx="1193" cy="46" r="30" fill="#666" />
            <path d="M1182 38Q1183 28 1193 28Q1204 29 1204 38Q1203 44 1193 50V55M1193 60V67" fill="none" stroke="#e2e2e2" strokeWidth="6" />
          </Icon>
        </IconButton>
        <Avatar>AG</Avatar>
      </Account>
    </TitleBar>
  );
}

export default function App() {
  return (
    <Page>
      <GlobalStyle />
      <DataSide />
      <Workspace>
        <AppTitleBar />
        <Ribbon>
          <DesignButton>DESIGN <Caret /></DesignButton>
          <RibbonMain>
            <RibbonTabs>
              <RibbonTab $active>SOLID</RibbonTab>
              <RibbonTab>SURFACE</RibbonTab>
              <RibbonTab>SHEET METAL</RibbonTab>
              <RibbonTab>TOOLS</RibbonTab>
            </RibbonTabs>
            <Groups>
              {groups.map((g) => (
                <Group key={g.label} $pad={g.pad}>
                  <Tools $gap={g.gap}>
                    {g.tools.map(([name, art]) => (
                      <Tool key={name} aria-label={name} $active={name === 'Create Sketch'}>{art}</Tool>
                    ))}
                  </Tools>
                  <GroupLabel>{g.label}<Caret size={8} /></GroupLabel>
                </Group>
              ))}
            </Groups>
          </RibbonMain>
        </Ribbon>
        <Viewport>
          <ModelScene />
          <div>
            <Dock $open>
              <Icon box="0 0 13 8" size={13} height={8}>
                <path d="M0 4L6 0V8ZM7 4L13 0V8Z" fill="#333" />
              </Icon>
              <DockTitle>BROWSER</DockTitle>
              <IconButton aria-label="Collapse browser"><RoundSign /></IconButton>
              <Grip />
            </Dock>
            <Tree>
              <TreeRow $root>
                <Icon box="86 148 44 44" size={14}>
                  <defs>
                    <linearGradient id="fold"><stop stopColor="#ddd" /><stop offset="1" stopColor="#555" /></linearGradient>
                  </defs>
                  <path d="M89 190H128V151Z" fill="url(#fold)" stroke="#333" strokeWidth="4" />
                </Icon>
                <RootItem>
                  <Icon box="171 141 60 60">
                    <path d="M171 171Q200 135 230 171Q200 207 171 171Z" fill="#999" />
                    <circle cx="200" cy="171" r="12" fill="none" stroke="#f1f1f1" strokeWidth="4" />
                  </Icon>
                  <RootName>
                    <Icon box="263 141 60 60">
                      <path d="M266 157L279 144H321V184L306 199H266Z" fill="#fafafa" stroke="#555" strokeWidth="3" />
                      <path d="M268 160H304V197H268Z" fill="#dfe2ea" />
                      <path d="M307 158L320 146V184L307 197Z" fill="#c9ccd6" />
                    </Icon>
                    Cara_B v1
                  </RootName>
                  <ActiveRadio type="radio" name="active" defaultChecked aria-label="Activate Cara_B v1" />
                </RootItem>
              </TreeRow>
              <TreeRow>
                <Expander />
                <TreeItem><Gear size={21} color="#999" /><TreeText>Document Settings</TreeText></TreeItem>
              </TreeRow>
              <TreeRow>
                <Expander />
                <TreeItem><FolderIcon /><TreeText>Named Views</TreeText></TreeItem>
              </TreeRow>
              <TreeRow>
                <Expander />
                <TreeItem>
                  <Icon box="237 411 63 63" size={21}>
                    <path d="M238 442Q268 408 298 442Q268 476 238 442Z" fill="#d9d9d9" />
                    <circle cx="268" cy="442" r="12" fill="none" stroke="#f1f1f1" strokeWidth="4" />
                    <path d="M246 416L294 464" stroke="#f1f1f1" strokeWidth="10" />
                    <path d="M243 420L291 466" stroke="#d9d9d9" strokeWidth="4" />
                  </Icon>
                  <FolderIcon />
                  <TreeText>Origin</TreeText>
                </TreeItem>
              </TreeRow>
            </Tree>
          </div>
          <Hint role="tooltip">Select a plane or planar face</Hint>
          <ViewCube />
          <Dock>
            <DockTitle $indent>COMMENTS</DockTitle>
            <IconButton aria-label="Expand comments"><RoundSign plus /></IconButton>
            <Grip />
          </Dock>
          <NavBar>
            {navItems.map((n) => (
              <NavButton key={n.name} aria-label={n.name} $menu={n.menu} $wide={n.wide}>
                <Icon box={n.box}>{n.art}</Icon>
                {n.menu && <Caret size={7} color="#333" />}
              </NavButton>
            ))}
          </NavBar>
        </Viewport>
        <Timeline>
          <Playback>
            {playItems.map(([name, d, x]) => (
              <IconButton key={name} aria-label={name}>
                <Icon box={`${x} 230 60 60`}><path d={d} fill="#4d4d4d" /></Icon>
              </IconButton>
            ))}
            <Icon box="513 204 48 120" size={16} height={40}>
              <path d="M516 204H561V218L544 238V324H536V238L516 218Z" fill="#666" />
            </Icon>
          </Playback>
          <IconButton aria-label="Timeline settings"><Gear size={20} color="#999" /></IconButton>
        </Timeline>
      </Workspace>
    </Page>
  );
}
